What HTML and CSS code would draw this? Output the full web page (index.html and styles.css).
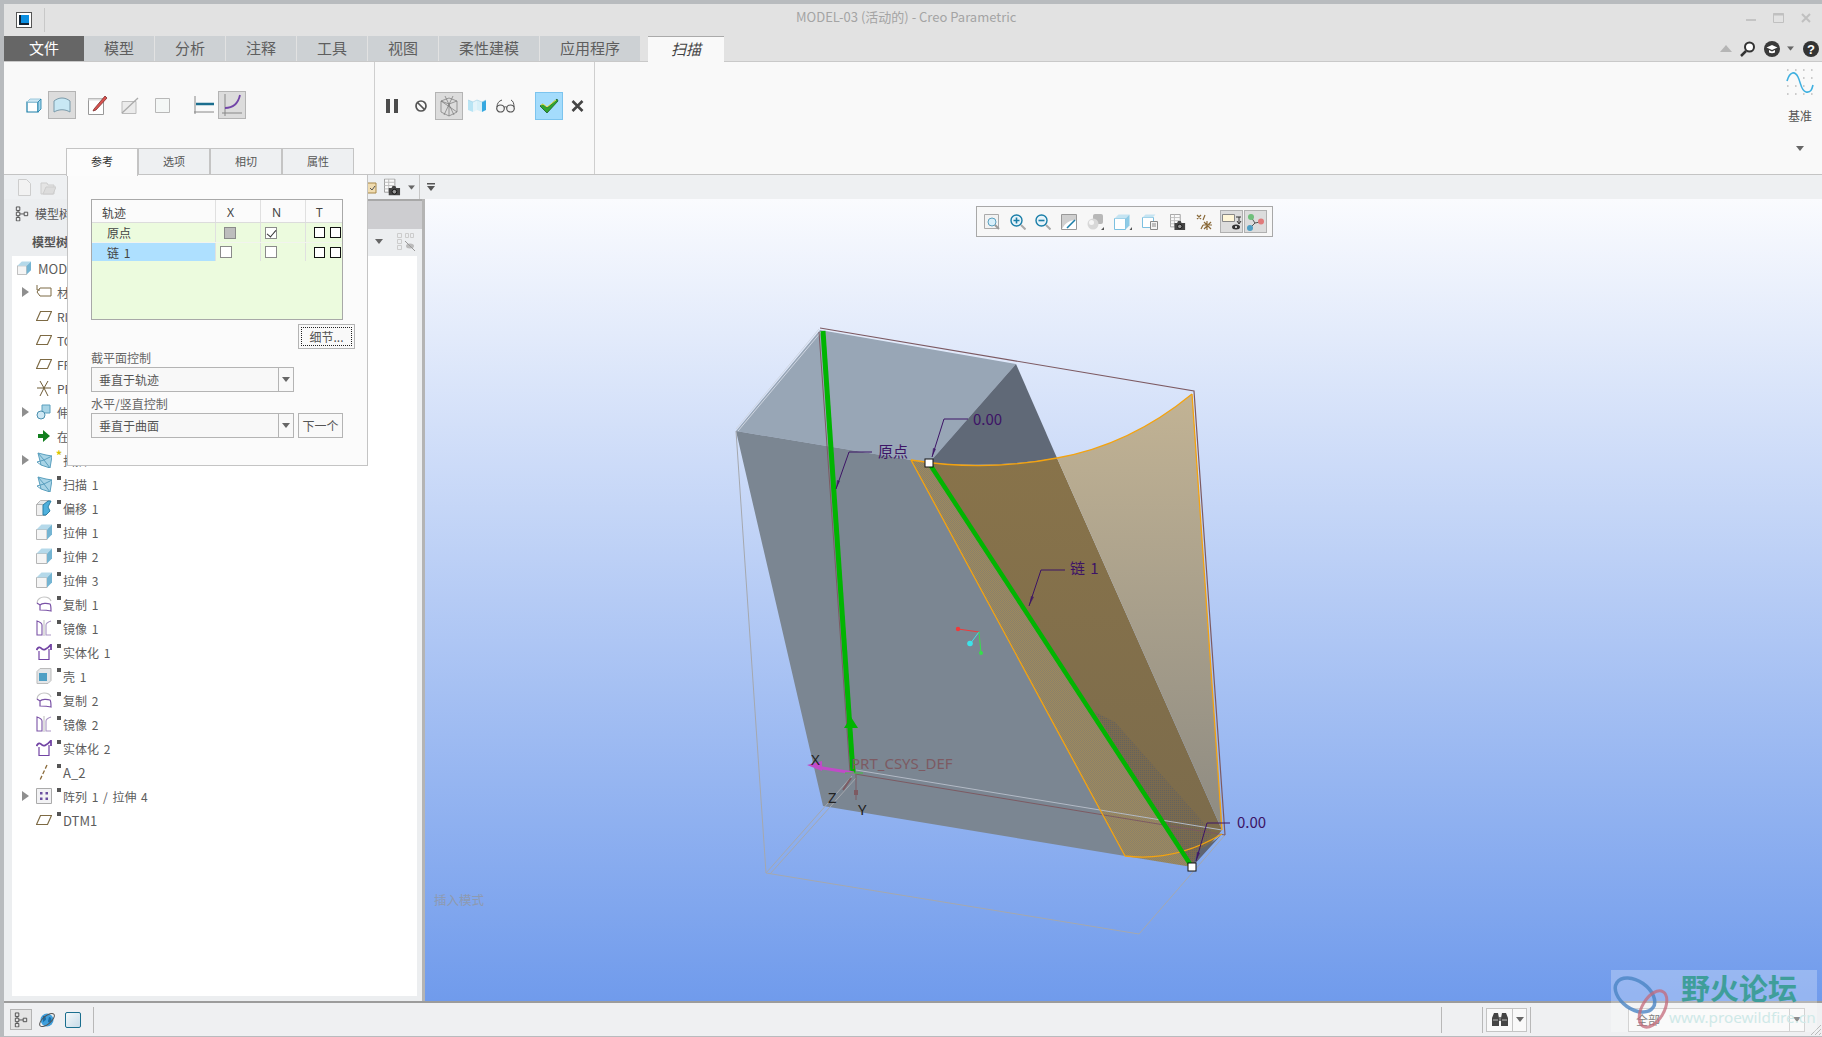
FILE: index.html
```html
<!DOCTYPE html>
<html lang="zh">
<head>
<meta charset="utf-8">
<title>MODEL-03 - Creo Parametric</title>
<link rel="stylesheet" href="styles.css">
</head>
<body>
<svg class="defs" width="0" height="0">
  <defs>
    <symbol id="i-extrude" viewBox="0 0 16 16"><path d="M.5 5.500h10.500v10H.5z" fill="#f5f5f5" stroke="#b5b5b5"/><path d="M.5 5.500l5-5H16l-5 5z" fill="#b5d9ea"/><path d="M11 5.500l5-5v10l-5 5z" fill="#74b4d2"/></symbol>
    <symbol id="i-sweep" viewBox="0 0 16 16"><path d="M2 1l8 2 6 1-2 12-9-3z" fill="#a8d4e6" stroke="#5a9fbe"/><path d="M2 1l6 7 8-4M8 8l6 8M8 8L1 10l4 3" fill="none" stroke="#5a9fbe"/></symbol>
    <symbol id="i-offset" viewBox="0 0 16 16"><path d="M.5 4.500h9v11h-9z" fill="#f0f0f0" stroke="#b5b5b5"/><path d="M.5 4.500l4-4h9l-4 4z" fill="#e4e8ea" stroke="#b5b5b5"/><path d="M7 5l5-4h3l-3 6 2 4-4 4H7z" fill="#4fb0dc" stroke="#2b7fa5"/></symbol>
    <symbol id="i-copy" viewBox="0 0 16 16"><path d="M1 7C1 3 5 1 8 1c4 0 6 1 7 4" fill="none" stroke="#c4c4c4" stroke-width="1.200"/><path d="M1 7c1 1 2 1 3 2M4 14V9c2-2 7-2 10-1 1 1 1 4 1 7-4-1-7-1-11-1z" fill="none" stroke="#7a52a6" stroke-width="1.200"/></symbol>
    <symbol id="i-mirror" viewBox="0 0 16 16"><path d="M1 1c3 1 5 2 5 4v10H1z" fill="none" stroke="#7a52a6" stroke-width="1.100"/><path d="M15 1c-3 1-5 2-5 4v10h5" fill="none" stroke="#a994c4" stroke-width="1.100"/><path d="M8 0v16" stroke="#bbb" stroke-width="1"/></symbol>
    <symbol id="i-solid" viewBox="0 0 16 16"><path d="M3 7v8.500h10V5" fill="#fff" stroke="#7244a4" stroke-width="1.200"/><path d="M.5 6c1.500-3 3.500-3.500 5-1.500s5 1.500 9.500-4L15 6" fill="none" stroke="#7244a4" stroke-width="1.800"/></symbol>
    <symbol id="i-shell" viewBox="0 0 16 16"><path d="M1 3.500l3-3h11v12l-3 3H1z" fill="#e4e6e8" stroke="#bbb"/><path d="M3 5h8v8H3z" fill="#4f9fc4"/></symbol>
    <symbol id="i-axis" viewBox="0 0 16 16"><path d="M11 1L4 16" fill="none" stroke="#8a6a3a" stroke-width="1.300" stroke-dasharray="4 2"/></symbol>
    <symbol id="i-pattern" viewBox="0 0 16 16"><path d="M.5.500h15v15H.5z" fill="#f2f2f4" stroke="#aaa"/><path d="M4 4h2.500v2.500H4zM9.500 4H12v2.500H9.500zM4 9.500h2.500V12H4zM9.500 9.500H12V12H9.500z" fill="#6a4fa0"/></symbol>
    <symbol id="i-plane" viewBox="0 0 16 16"><path d="M4.500 3.500h11l-4 9H.5z" fill="none" stroke="#7d6a44" stroke-width="1.200"/></symbol>
    <symbol id="i-tree" viewBox="0 0 16 18"><path d="M1.500 1.500h4v4h-4zM1.500 7.500h4v4h-4zM1.500 13.500h4v4h-4zM10.500 7.500h4v4h-4zM5.500 9.500h5M3.500 5.500v2M3.500 11.500v2" fill="none" stroke="#444"/></symbol>
    <symbol id="i-arrowdown" viewBox="0 0 8 5"><path d="M0 0h8L4 5z" fill="#666"/></symbol>
    <symbol id="i-cam" viewBox="0 0 18 18"><path d="M.5.500h11v14H.5z" fill="#fafafa" stroke="#999"/><path d="M.5 4h11M.5 7.500h11M.5 11h11M5 .5v14" stroke="#bbb"/><path d="M5 10h3l1-2h3l1 2h4v8H5z" fill="#444"/><circle cx="11" cy="14" r="2.500" fill="#999" stroke="#111"/></symbol>
  </defs>
</svg>

<div class="app">
  <header class="titlebar">
    <span class="appicon"><span class="appicon-in"></span></span>
    <span class="tsep"></span>
    <span class="title">MODEL-03 (活动的) - Creo Parametric</span>
    <span class="winctl">
      <svg width="10" height="10" viewBox="0 0 10 10"><path d="M0 7h10" stroke="#c4c4c4" stroke-width="2"/></svg>
      <svg width="11" height="10" viewBox="0 0 11 10"><path d="M.5.500h10v9H.5z" fill="none" stroke="#c0c0c0"/><path d="M0 1.500h11" stroke="#c0c0c0" stroke-width="2"/></svg>
      <svg width="10" height="10" viewBox="0 0 10 10"><path d="M1 1l8 8M9 1l-8 8" stroke="#c0c0c0" stroke-width="2"/></svg>
    </span>
  </header>

  <nav class="tabs">
    <span class="tab tab-file">文件</span>
    <span class="tab w70">模型</span>
    <span class="tab w70">分析</span>
    <span class="tab w70">注释</span>
    <span class="tab w70">工具</span>
    <span class="tab w70">视图</span>
    <span class="tab w100">柔性建模</span>
    <span class="tab w100">应用程序</span>
    <span class="tab tab-active">扫描</span>
    <span class="tabtools">
      <svg class="tt-up" width="12" height="7" viewBox="0 0 12 7"><path d="M6 0l6 7H0z" fill="#b5b5b5"/></svg>
      <svg class="tt-find" width="15" height="16" viewBox="0 0 15 16"><circle cx="9.500" cy="6" r="4.500" fill="#fff" stroke="#333" stroke-width="2"/><path d="M6 10l-5 5" stroke="#333" stroke-width="2.500"/></svg>
      <svg width="16" height="16" viewBox="0 0 16 16"><circle cx="8" cy="8" r="8" fill="#3a3a3a"/><path d="M2.500 6.500L8 4l5.500 2.500L8 9zM5 9v2.500c2 1 4 1 6 0V9L8 10.500z" fill="#fff"/></svg>
      <svg class="tt-drop" width="7" height="5" viewBox="0 0 8 5"><use href="#i-arrowdown"/></svg>
      <svg width="16" height="16" viewBox="0 0 16 16"><circle cx="8" cy="8" r="8" fill="#333"/><text x="8" y="12.500" class="helpq">?</text></svg>
    </span>
  </nav>

  <section class="ribbon">
    <div class="rgroup rg1">
      <div class="rrow">
        <span class="rb"><svg width="16" height="15" viewBox="0 0 16 15"><path d="M1 4h11v10H1z" fill="#fff" stroke="#1a7ea8" stroke-width="1.200"/><path d="M1 4l3-3h11l-3 3z" fill="#cfe8f4" stroke="#9cc8dc"/><path d="M12 4l3-3v10l-3 3z" fill="#a4d4ea" stroke="#1a7ea8" stroke-width=".8"/></svg></span>
        <span class="rb on"><svg width="18" height="16" viewBox="0 0 18 16"><path d="M1 4c5-4 11-4 16 0v11c-5-3-11-3-16 0z" fill="#c8e8f4" stroke="#7a9aaa"/></svg></span>
        <span class="rb m8"><svg width="20" height="20" viewBox="0 0 20 20"><path d="M.5 3.500h15v16H.5z" fill="#fff" stroke="#999"/><path d="M.5 3.500h15v2H.5z" fill="#ddd"/><path d="M6 14L17 1l2 2-11 12-3 1z" fill="#d9534f" stroke="#803030" stroke-width=".8"/></svg></span>
        <span class="rb m4"><svg width="18" height="17" viewBox="0 0 18 17"><path d="M1 4.500h14v12H1z" fill="#ebebeb" stroke="#bbb"/><path d="M1 16L17 1" stroke="#aaa" stroke-width="1.300"/></svg></span>
        <span class="rb m4"><svg width="15" height="15" viewBox="0 0 15 15"><path d="M.5.500h14v14H.5z" fill="#f4f7f6" stroke="#b8b8b8"/></svg></span>
        <span class="rb m14"><svg width="20" height="20" viewBox="0 0 20 20"><path d="M1 1v18" stroke="#888"/><path d="M0 17h20" stroke="#888"/><path d="M2 9h18" stroke="#1b6e8e" stroke-width="2.500"/></svg></span>
        <span class="rb on"><svg width="20" height="22" viewBox="0 0 20 22"><path d="M3 0v22M0 19h20" stroke="#888"/><path d="M3 14c7 0 13-4 15-13" fill="none" stroke="#7245a8" stroke-width="1.800"/></svg></span>
      </div>
      <div class="subtabs">
        <span class="subtab sel">参考</span>
        <span class="subtab">选项</span>
        <span class="subtab">相切</span>
        <span class="subtab">属性</span>
      </div>
    </div>
    <div class="rgroup rg2">
      <div class="rrow">
        <span class="rb"><svg width="12" height="14" viewBox="0 0 12 14"><path d="M0 0h4v14H0zM8 0h4v14H8z" fill="#4c4c4c"/></svg></span>
        <span class="rb m1"><svg width="12" height="12" viewBox="0 0 12 12"><circle cx="6" cy="6" r="5" fill="none" stroke="#555" stroke-width="1.700"/><path d="M2.500 2.500l7 7" stroke="#555" stroke-width="1.700"/></svg></span>
        <span class="rb on"><svg width="22" height="22" viewBox="0 0 22 22"><path d="M3 6l8-3 8 3v11l-8 4-8-4zM3 6l8 3 8-3M11 9v12M7 1l9 19M15 1L6 20M3 6l16 11" fill="none" stroke="#777" stroke-width=".7"/></svg></span>
        <span class="rb"><svg width="18" height="16" viewBox="0 0 18 16"><path d="M0 2l5 2v10l-5-2z" fill="#b8e4f4"/><path d="M5 4l4-2v10l-4 2z" fill="#e4f4fa"/><path d="M9 2l5 2v10l-5-2z" fill="#d8f0f8"/><path d="M14 4l4-2v10l-4 2z" fill="#36a8e0"/><path d="M0 2l5 2 4-2 5 2 4-2" fill="none" stroke="#9ccfe4" stroke-width=".6"/></svg></span>
        <span class="rb"><svg width="19" height="14" viewBox="0 0 19 14"><ellipse cx="4.500" cy="9.500" rx="3.800" ry="3.500" fill="#f4f4f4" stroke="#555" stroke-width="1.200"/><ellipse cx="14.500" cy="9.500" rx="3.800" ry="3.500" fill="#f4f4f4" stroke="#555" stroke-width="1.200"/><path d="M8 8.500c1-1 2-1 3 0M1 8c0-4 2-6 5-7M18 8c0-4-1-6-3-7" fill="none" stroke="#555"/></svg></span>
        <span class="rb okbtn m16"><svg width="20" height="16" viewBox="0 0 20 16"><path d="M1 8l3-2 4 4L18 1l1 2L8 15z" fill="#2fa52f" stroke="#1c5a2a" stroke-width=".8"/><path d="M2 7l2-1 4 3 9-7" fill="none" stroke="#e6e24a"/></svg></span>
        <span class="rb"><svg width="13" height="12" viewBox="0 0 13 12"><path d="M1.500 1l10 10M11.500 1l-10 10" stroke="#444" stroke-width="2.600"/></svg></span>
      </div>
    </div>
    <div class="rdatum">
      <svg width="28" height="26" viewBox="0 0 28 26">
        <path d="M1 12C4 2 9 2 12 8s3 14 8 15 6-3 7-7" fill="none" stroke="#3fb0e0" stroke-width="1.600"/>
        <path d="M1.500 1h.8M9.500 1h.8M17.500 1h.8M25.500 1h.8M17.500 9h.8M25.500 9h.8M1.500 17h.8M9.500 17h.8M17.500 17h.8M1.500 25h.8M9.500 25h.8M17.500 25h.8M25.500 25h.8" stroke="#444"/>
      </svg>
      <span class="rdatum-t">基准</span>
      <svg class="rdatum-a" width="8" height="5" viewBox="0 0 8 5"><use href="#i-arrowdown"/></svg>
    </div>
  </section>

  <div class="quick">
    <svg class="q-new" width="13" height="17" viewBox="0 0 13 17"><path d="M.5.500h8l4 4v12H.5z" fill="#f2f2f2" stroke="#cdcdcd"/></svg>
    <svg class="q-open" width="16" height="15" viewBox="0 0 16 15"><path d="M1 3h6l1 2h6v9H1z" fill="#e4e4e4" stroke="#cdcdcd"/><path d="M3 14l3-7h10l-3 7z" fill="#dcdcdc" stroke="#cdcdcd"/></svg>
    <svg class="q-clip" width="10" height="14" viewBox="0 0 10 14"><path d="M0 3h9v10H0z" fill="#f0dcb0" stroke="#a88848"/><path d="M3 8l2 2 3-4" fill="none" stroke="#555"/></svg>
    <svg class="q-cam" width="17" height="18" viewBox="0 0 18 18"><use href="#i-cam"/></svg>
    <svg class="q-drop" width="7" height="5" viewBox="0 0 8 5"><use href="#i-arrowdown"/></svg>
    <span class="q-sep"></span>
    <svg class="q-more" width="8" height="8" viewBox="0 0 8 8"><path d="M0 0h8v1.500H0z" fill="#555"/><path d="M0 3h8L4 8z" fill="#555"/></svg>
  </div>

  <main class="main">
    <aside class="left">
      <div class="lhead">
        <svg class="lhead-ic" width="14" height="17" viewBox="0 0 16 18"><use href="#i-tree"/></svg>
        <span class="lhead-t">模型树</span>
        <span class="lhead-fill"></span>
      </div>
      <div class="lsub">
        <span class="lsub-t">模型树</span>
        <svg class="lsub-d" width="8" height="5" viewBox="0 0 8 5"><use href="#i-arrowdown"/></svg>
        <svg class="lsub-ic" width="20" height="19" viewBox="0 0 20 19"><path d="M1.500 1.500h4v4h-4zM1.500 7.500h4v4h-4zM1.500 13.500h4v4h-4zM9.500 1.500h3v4h-3zM14.500 1.500h3v4h-3z" fill="none" stroke="#ccc"/><ellipse cx="14" cy="14" rx="4" ry="2.500" fill="#bbb"/><path d="M9 9l10 10" stroke="#999"/></svg>
      </div>
      <div class="tree">
        <div class="row root"><svg class="ic-part" width="14" height="14" viewBox="0 0 16 16"><use href="#i-extrude"/></svg><span>MODEL-03.PRT</span></div>
        <div class="row exp"><i class="tri"></i><svg class="ic" width="16" height="16" viewBox="0 0 16 16"><path d="M1 1v5h3M4 4h11v8H4L1 8z" fill="none" stroke="#7d6a44"/></svg><span>材料</span></div>
        <div class="row"><svg class="ic" width="16" height="16" viewBox="0 0 16 16"><use href="#i-plane"/></svg><span>RIGHT</span></div>
        <div class="row"><svg class="ic" width="16" height="16" viewBox="0 0 16 16"><use href="#i-plane"/></svg><span>TOP</span></div>
        <div class="row"><svg class="ic" width="16" height="16" viewBox="0 0 16 16"><use href="#i-plane"/></svg><span>FRONT</span></div>
        <div class="row"><svg class="ic" width="16" height="16" viewBox="0 0 16 16"><path d="M4 1l4 7 4-7M8 8L4 16M8 8l4 8M1 8h14" fill="none" stroke="#6d5a34"/></svg><span>PRT_CSYS_DEF</span></div>
        <div class="row exp"><i class="tri"></i><svg class="ic" width="16" height="16" viewBox="0 0 16 16"><path d="M6 1h8v8H6z" fill="#a8d4e6" stroke="#5a9fbe"/><circle cx="5" cy="11" r="4" fill="#cfe8f4" stroke="#4a8fae"/></svg><span>伸出项</span></div>
        <div class="row"><svg class="ic" width="16" height="16" viewBox="0 0 16 16"><path d="M2 6h5V2l7 6-7 6v-4H2z" fill="#127f1e"/></svg><span>在此插入</span></div>
        <div class="row exp mark"><i class="tri"></i><svg class="ic" width="16" height="16" viewBox="0 0 16 16"><use href="#i-sweep"/></svg><b class="star">*</b><span>扫描 2</span></div>
        <div class="row mark"><svg class="ic" width="16" height="16" viewBox="0 0 16 16"><use href="#i-sweep"/></svg><b class="dot"></b><span>扫描 1</span></div>
        <div class="row mark"><svg class="ic" width="16" height="16" viewBox="0 0 16 16"><use href="#i-offset"/></svg><b class="dot"></b><span>偏移 1</span></div>
        <div class="row mark"><svg class="ic" width="16" height="16" viewBox="0 0 16 16"><use href="#i-extrude"/></svg><b class="dot"></b><span>拉伸 1</span></div>
        <div class="row mark"><svg class="ic" width="16" height="16" viewBox="0 0 16 16"><use href="#i-extrude"/></svg><b class="dot"></b><span>拉伸 2</span></div>
        <div class="row mark"><svg class="ic" width="16" height="16" viewBox="0 0 16 16"><use href="#i-extrude"/></svg><b class="dot"></b><span>拉伸 3</span></div>
        <div class="row mark"><svg class="ic" width="16" height="16" viewBox="0 0 16 16"><use href="#i-copy"/></svg><b class="dot"></b><span>复制 1</span></div>
        <div class="row mark"><svg class="ic" width="16" height="16" viewBox="0 0 16 16"><use href="#i-mirror"/></svg><b class="dot"></b><span>镜像 1</span></div>
        <div class="row mark"><svg class="ic" width="16" height="16" viewBox="0 0 16 16"><use href="#i-solid"/></svg><b class="dot"></b><span>实体化 1</span></div>
        <div class="row mark"><svg class="ic" width="16" height="16" viewBox="0 0 16 16"><use href="#i-shell"/></svg><b class="dot"></b><span>壳 1</span></div>
        <div class="row mark"><svg class="ic" width="16" height="16" viewBox="0 0 16 16"><use href="#i-copy"/></svg><b class="dot"></b><span>复制 2</span></div>
        <div class="row mark"><svg class="ic" width="16" height="16" viewBox="0 0 16 16"><use href="#i-mirror"/></svg><b class="dot"></b><span>镜像 2</span></div>
        <div class="row mark"><svg class="ic" width="16" height="16" viewBox="0 0 16 16"><use href="#i-solid"/></svg><b class="dot"></b><span>实体化 2</span></div>
        <div class="row mark"><svg class="ic" width="16" height="16" viewBox="0 0 16 16"><use href="#i-axis"/></svg><b class="dot"></b><span class="lat">A_2</span></div>
        <div class="row exp mark"><i class="tri"></i><svg class="ic" width="16" height="16" viewBox="0 0 16 16"><use href="#i-pattern"/></svg><b class="dot"></b><span>阵列 1 / 拉伸 4</span></div>
        <div class="row mark"><svg class="ic" width="16" height="16" viewBox="0 0 16 16"><use href="#i-plane"/></svg><b class="dot"></b><span class="lat">DTM1</span></div>
      </div>
    </aside>

    <section class="view">
      <div class="vtools">
        <svg width="16" height="16" viewBox="0 0 16 16"><path d="M.5.500h14v14H.5z" fill="#f2f2f2" stroke="#aaa"/><circle cx="8" cy="8" r="4" fill="#d8effa" stroke="#5a9fbe"/><path d="M11 11l4 4" stroke="#999" stroke-width="2"/></svg>
        <svg width="16" height="16" viewBox="0 0 16 16"><circle cx="6.500" cy="6.500" r="5.500" fill="#e8f4fa" stroke="#1a7ea8" stroke-width="1.400"/><path d="M3.500 6.500h6M6.500 3.500v6" stroke="#1a7ea8" stroke-width="1.600"/><path d="M11 11l4.500 4.500" stroke="#aaa" stroke-width="2"/></svg>
        <svg width="16" height="16" viewBox="0 0 16 16"><circle cx="6.500" cy="6.500" r="5.500" fill="#e8f4fa" stroke="#1a7ea8" stroke-width="1.400"/><path d="M3.500 6.500h6" stroke="#1a7ea8" stroke-width="1.600"/><path d="M11 11l4.500 4.500" stroke="#aaa" stroke-width="2"/></svg>
        <svg width="16" height="16" viewBox="0 0 16 16"><path d="M.5.500h15v15H.5z" fill="#fff" stroke="#999"/><path d="M1 1h14v5c-6 0-11 3-14 9z" fill="#cfcfcf"/><path d="M6 14L14 6" stroke="#1a7ea8" stroke-width="1.600"/></svg>
        <svg class="corner" width="18" height="16" viewBox="0 0 18 16"><rect x="6" y="0" width="10" height="10" rx="2" fill="#b8b8b8"/><circle cx="6" cy="10" r="5.500" fill="#d8d8d8"/><circle cx="4.500" cy="8.500" r="2.500" fill="#f6f6f6"/><path d="M14 16l3-3v3z" fill="#555"/></svg>
        <svg class="corner" width="18" height="16" viewBox="0 0 18 16"><path d="M.5 4.500h11v11H.5z" fill="#fff" stroke="#7cc0e0"/><path d="M.5 4.500l4-4h11l-4 4z" fill="#c5e4f2"/><path d="M11.500 4.500l4-4v11l-4 4z" fill="#8fcbe6"/><path d="M15.500 16l2.500-3v3z" fill="#555"/></svg>
        <svg class="corner" width="18" height="16" viewBox="0 0 18 16"><path d="M.5 3.500h11v10H.5z" fill="#fff" stroke="#7cc0e0"/><path d="M.5 3.500l3-3h10l-3 3z" fill="#c5e4f2"/><path d="M8.500 7.500h7v8h-7z" fill="#f4f4f4" stroke="#888"/><path d="M10 10h4M10 12h4" stroke="#888"/></svg>
        <svg width="16" height="16" viewBox="0 0 18 18"><use href="#i-cam"/></svg>
        <svg class="corner" width="18" height="16" viewBox="0 0 18 16"><path d="M1 1l4 4M5 1L1 5M9 1L7 6M5 15l2-4M8 8l7 7M15 8l-7 7M11 7v9M7 11h9" stroke="#8a6a3a" stroke-width="1.200" fill="none"/></svg>
        <span class="vt-on"><svg width="20" height="16" viewBox="0 0 20 16"><path d="M.5.500h12v7H.5z" fill="#fff6d8" stroke="#888"/><path d="M14 3h5M17 3v6M15 7l2 3 2-3" fill="none" stroke="#333"/><ellipse cx="14" cy="13" rx="4" ry="2.500" fill="#333"/><circle cx="14" cy="13" r="1" fill="#fff"/></svg></span>
        <span class="vt-on"><svg width="18" height="18" viewBox="0 0 18 18"><path d="M5 4l4 6 5-1M9 10l-5 5" stroke="#555" fill="none"/><circle cx="5" cy="4" r="3" fill="#6fbf7a"/><circle cx="15" cy="8.500" r="3" fill="#e07a7a"/><circle cx="4" cy="15" r="3" fill="#4f9fc4"/></svg></span>
      </div>

      <svg class="scene" width="1397" height="802" viewBox="425 199 1397 802">
        <defs>
          <linearGradient id="gtan" x1="0" y1="0" x2="0" y2="1"><stop offset="0" stop-color="#c2b394"/><stop offset="1" stop-color="#8e8b82"/></linearGradient>
          <linearGradient id="gbrown" x1="0" y1="0" x2="0" y2="1"><stop offset="0" stop-color="#88734a"/><stop offset="1" stop-color="#7b6b4c"/></linearGradient>
          <pattern id="pstrip" width="2" height="2" patternUnits="userSpaceOnUse"><rect width="2" height="2" fill="#a08a5a"/><rect width="1" height="1" fill="#88806c"/><rect x="1" y="1" width="1" height="1" fill="#88806c"/></pattern>
          <pattern id="pdark" width="2" height="2" patternUnits="userSpaceOnUse"><rect width="2" height="2" fill="#7a6a4e"/><rect width="1" height="1" fill="#64625c"/></pattern>
        </defs>
        <path d="M736 431L820 330 1016 364 929 463 911 460z" fill="#98a6b6"/>
        <path d="M1016 364L1057 458Q1000 468 929 463z" fill="#606977"/>
        <path d="M736 431L911 460 1125 856 1192 867 823 806z" fill="#7b8692"/>
        <path d="M911 460L929 463 1192 867 1125 856z" fill="url(#pstrip)"/>
        <path d="M929 463Q1000 468 1057 458L1222 830 1192 867z" fill="url(#gbrown)"/>
        <path d="M1057 458Q1130 445 1192 394L1222 830z" fill="url(#gtan)"/>
        <path d="M1095 712L1115 722 1212 832 1192 867z" fill="url(#pdark)"/>
        <path d="M1192 867L1198 850Q1212 844 1222 834z" fill="#5f6470"/>

        <g fill="none" stroke="#a5a8ae" stroke-width="1">
          <path d="M736 431L766 873 1139 934 1225 835"/>
          <path d="M766 873L852 776M770 874L856 778"/>
        </g>
        <path d="M736 429L819 329M738 431L821 332" fill="none" stroke="#cfd6e2"/>
        <path d="M820 328L1194 391 1225 835" fill="none" stroke="#7d5a62" stroke-width="1.200"/>
        <path d="M855 774L1225 835" fill="none" stroke="#7d5a62" stroke-width="1"/>
        <path d="M856 770L1222 830" fill="none" stroke="#b3bac6"/>
        <path d="M819 332L850 773" fill="none" stroke="#7d5a62"/>

        <g fill="none" stroke="#f4a30f" stroke-width="1.300">
          <path d="M911 460Q985 472 1057 458Q1130 445 1192 394"/>
          <path d="M1192 394L1222 830"/>
          <path d="M911 460L1125 856Q1175 862 1222 834"/>
        </g>

        <path d="M823 331L853 773" stroke="#01b501" stroke-width="5" fill="none"/>
        <path d="M851 717L858 728H844z" fill="#01b501"/>
        <path d="M929 463L1192 867" stroke="#01b501" stroke-width="4.500" fill="none"/>

        <path d="M854 773L816 767" stroke="#c04bc8" stroke-width="3"/>
        <path d="M807 765L822 761 822 771z" fill="#c04bc8"/>
        <path d="M845 773h18" stroke="#3fc43f"/>
        <path d="M851 778L843 790" stroke="#7d5a62" stroke-width="2" fill="none"/>
        <path d="M856 775V800" stroke="#7d5a62" fill="none"/>
        <path d="M854 790h4v5h-4z" fill="#7d5a62"/>

        <g fill="none" stroke="#3d1466" stroke-width="1">
          <path d="M932 457L944 419H968"/>
          <path d="M836 489L849 452H872"/>
          <path d="M1029 606L1041 570H1065"/>
          <path d="M1196 861L1207 823H1230"/>
        </g>
        <g fill="#3d1466" opacity=".75">
          <path d="M932 457l1-9 3 1z"/><path d="M836 489l1-9 3 1z"/><path d="M1029 606l2-10 3 1z"/><path d="M1196 861l1-9 3 1z"/>
        </g>

        <path d="M979 632L958 629" stroke="#f03a3a" stroke-width="1"/><circle cx="958" cy="629" r="2.200" fill="#f03a3a"/>
        <path d="M979 632L970 644" stroke="#3ce4ea" stroke-width="1"/><circle cx="970" cy="643.500" r="2.800" fill="#3ce4ea"/>
        <path d="M979 632L981 653" stroke="#35e04a" stroke-width="1"/><circle cx="981" cy="653" r="2" fill="#35e04a"/>

        <rect x="925" y="459" width="8" height="8" fill="#fff" stroke="#111"/>
        <rect x="1188" y="863" width="8" height="8" fill="#fff" stroke="#111"/>

        <text x="973" y="425" class="lbl">0.00</text>
        <text x="878" y="457" class="lbl">原点</text>
        <text x="1070" y="574" class="lbl">链 1</text>
        <text x="1237" y="828" class="lbl">0.00</text>
        <text x="851" y="769" class="csys">PRT_CSYS_DEF</text>
        <text x="811" y="765" class="axl">X</text>
        <text x="828" y="803" class="axl">Z</text>
        <text x="858" y="815" class="axl">Y</text>
        <text x="434" y="905" class="mode">插入模式</text>
      </svg>
    </section>

    <div class="popup">
      <div class="tbl">
        <div class="tr th"><span class="c1">轨迹</span><span class="c2">X</span><span class="c2">N</span><span class="c3">T</span></div>
        <div class="tr r1"><span class="c1 ind">原点</span><span class="c2"><i class="cb gray"></i></span><span class="c2"><i class="cb chk"></i></span><span class="c3"><i class="cb k"></i><i class="cb k"></i></span></div>
        <div class="tr r2"><span class="c1 ind hl">链 1</span><span class="c2"><i class="cb"></i></span><span class="c2"><i class="cb"></i></span><span class="c3"><i class="cb k"></i><i class="cb k"></i></span></div>
      </div>
      <div class="detail-row"><span class="btn detail"><span class="focus">细节...</span></span></div>
      <div class="flabel">截平面控制</div>
      <div class="combo"><span class="combo-t">垂直于轨迹</span><span class="combo-a"><svg width="8" height="5" viewBox="0 0 8 5"><use href="#i-arrowdown"/></svg></span></div>
      <div class="flabel f2">水平/竖直控制</div>
      <div class="combo-row">
        <div class="combo"><span class="combo-t">垂直于曲面</span><span class="combo-a"><svg width="8" height="5" viewBox="0 0 8 5"><use href="#i-arrowdown"/></svg></span></div>
        <span class="btn next">下一个</span>
      </div>
    </div>
  </main>

  <footer class="status">
    <span class="st-on"><svg width="14" height="17" viewBox="0 0 16 18"><use href="#i-tree"/></svg></span>
    <svg class="st-globe" width="16" height="16" viewBox="0 0 16 16"><circle cx="8" cy="8" r="6.500" fill="#3f9fdc"/><path d="M4 4c2 0 3 1 3 3s-3 2-3 4M10 5c2 0 3 2 2 4s-3 2-3 0" fill="#1a6ea8"/><ellipse cx="8" cy="8" rx="9" ry="4" transform="rotate(-40 8 8)" fill="none" stroke="#555"/></svg>
    <span class="st-sq"></span>
    <span class="st-sep first"></span>
    <span class="st-grow"></span>
    <span class="st-sep"></span>
    <span class="st-gap"></span>
    <span class="st-sep"></span>
    <span class="st-find">
      <span class="st-bin"><svg width="16" height="15" viewBox="0 0 16 15"><path d="M2 1h4l1 5v8H0V6zM10 1h4l2 5v8H9V6z" fill="#444"/><path d="M7 5h2v4H7z" fill="#777"/><path d="M1 8h5M10 8h5" stroke="#bbb"/></svg></span>
      <span class="st-bin-a"><svg width="8" height="5" viewBox="0 0 8 5"><use href="#i-arrowdown"/></svg></span>
    </span>
    <span class="st-sep"></span>
    <div class="st-filter"><span class="st-filter-t">全部</span><span class="st-filter-a"><svg width="8" height="5" viewBox="0 0 8 5"><use href="#i-arrowdown"/></svg></span></div>
    <svg class="grip" width="12" height="12" viewBox="0 0 12 12"><path d="M11 1L1 11M11 5l-6 6M11 9l-2 2" stroke="#bbb"/></svg>
  </footer>

  <div class="wm">
    <svg class="wm-logo" width="62" height="62" viewBox="0 0 62 62">
      <ellipse cx="22" cy="25" rx="22" ry="14" transform="rotate(35 22 25)" fill="none" stroke="#4a84c4" stroke-width="3.500" opacity=".8"/>
      <ellipse cx="40" cy="39" rx="11" ry="20" transform="rotate(30 40 39)" fill="none" stroke="#c46a7a" stroke-width="3" opacity=".75"/>
    </svg>
    <span class="wm-cn">野火论坛</span>
    <span class="wm-en">www.proewildfire.cn</span>
  </div>
</div>
</body>
</html>
```
FILE: styles.css
```css
* { box-sizing: border-box; }
html, body { margin: 0; padding: 0; height: 100%; overflow: hidden; }
body { font-family: "Noto Sans CJK SC", "Noto Sans", sans-serif; font-size: 12px; color: #555; background: #eef0f2; }
.defs { position: absolute; }
.app { position: relative; width: 1822px; height: 1037px; display: flex; flex-direction: column; border-top: 4px solid #b8bbbe; border-left: 4px solid #b8bbbe; }

/* title bar */
.titlebar { height: 32px; flex: none; background: #e2e2e2; display: flex; align-items: center; position: relative; padding-left: 12px; }
.appicon { width: 16px; height: 16px; background: #fff; border: 1px solid #555; display: flex; align-items: center; justify-content: center; }
.appicon-in { width: 10px; height: 10px; background: #0a8ee0; border-left: 2px solid #123; border-bottom: 2px solid #123; }
.tsep { width: 1px; height: 24px; background: #c8c8c8; margin-left: 12px; }
.title { position: absolute; left: 792px; top: 3px; font-size: 13px; color: #a4a4a4; }
.winctl { margin-left: auto; display: flex; align-items: center; gap: 17px; padding-right: 11px; padding-bottom: 4px; }

/* tabs */
.tabs { height: 26px; flex: none; background: #e2e2e2; display: flex; gap: 1px; border-bottom: 1px solid #c9c9c9; }
.tab { height: 25px; background: #cdd1d4; color: #5e5e5e; font-size: 15px; display: flex; align-items: center; justify-content: center; padding-bottom: 3px; }
.tab-file { width: 80px; background: #666; color: #fff; margin-right: -1px; }
.w70 { width: 70px; }
.w100 { width: 100px; }
.tab-active { width: 76px; margin-left: 7px; height: 26px; background: #f9f9f9; font-style: italic; color: #444; border-top: 1px solid #aaa; z-index: 1; }
.tabtools { margin-left: auto; display: flex; align-items: center; padding-right: 3px; gap: 10px; }
.tt-up { margin-right: -2px; }
.tt-find { margin-right: -1px; }
.tt-drop { margin: 0 -1px 0 -3px; }
.helpq { font: bold 13px "Liberation Sans", sans-serif; fill: #fff; text-anchor: middle; }

/* ribbon */
.ribbon { height: 113px; flex: none; background: #f9f9f9; display: flex; border-bottom: 1px solid #c4c4c4; }
.rgroup { display: flex; flex-direction: column; justify-content: space-between; border-right: 1px solid #cfcfcf; padding-top: 29px; }
.rg1 { width: 371px; padding-left: 16px; }
.rg2 { width: 220px; padding-left: 3px; padding-top: 30px; }
.rrow { display: flex; align-items: center; height: 28px; }
.rb { width: 28px; height: 28px; display: flex; align-items: center; justify-content: center; flex: none; }
.rb.on { background: #dcdcdc; border: 1px solid #b4b4b4; }
.okbtn { background: #a4dcfc; border: 1px solid #7cc4ee; }
.m1 { margin-left: 1px; }
.m4 { margin-left: 4px; }
.m8 { margin-left: 8px; }
.m14 { margin-left: 14px; }
.m16 { margin-left: 16px; }
.subtabs { display: flex; margin-left: 46px; height: 26px; }
.subtab { width: 72px; height: 26px; font-size: 11px; color: #555; background: #eef0f2; border: 1px solid #c4c4c4; border-bottom: 0; display: flex; align-items: center; justify-content: center; padding-bottom: 2px; }
.subtab.sel { background: #fcfcfc; color: #333; height: 28px; padding-bottom: 4px; position: relative; z-index: 3; }
.rdatum { margin-left: auto; width: 40px; margin-right: 2px; display: flex; flex-direction: column; align-items: center; padding-top: 7px; }
.rdatum-t { font-size: 12px; color: #555; margin-top: 12px; line-height: 18px; }
.rdatum-a { margin-top: 21px; }

/* quick toolbar */
.quick { height: 24px; flex: none; background: #eef0f2; display: flex; align-items: center; padding-left: 14px; }
.q-new { flex: none; }
.q-open { margin-left: 9px; flex: none; }
.q-clip { margin-left: 311px; flex: none; }
.q-cam { margin-left: 7px; flex: none; }
.q-drop { margin-left: 7px; flex: none; }
.q-sep { width: 1px; height: 24px; background: #c8c8c8; margin-left: 4px; }
.q-more { margin-left: 7px; }

/* main */
.main { height: 802px; flex: none; display: flex; position: relative; }
.left { width: 421px; flex: none; background: #eceef0; border-right: 3px solid #b4b4b4; display: flex; flex-direction: column; }
.lhead { height: 30px; display: flex; align-items: center; padding-left: 11px; gap: 6px; flex: none; }
.lhead-ic { margin-bottom: 2px; }
.lhead-t { font-size: 12px; color: #555; margin-bottom: 2px; }
.lhead-fill { margin-left: auto; width: 70px; height: 30px; background: #cdcdd0; border-top: 2px solid #a8a8a8; }
.lsub { height: 27px; display: flex; align-items: center; padding-left: 28px; padding-bottom: 2px; flex: none; }
.lsub-t { font-size: 12px; font-weight: 700; color: #555; }
.lsub-d { margin-left: auto; margin-right: 13px; }
.lsub-ic { margin-right: 6px; }
.tree { margin: 0 5px 5px 8px; background: #fff; flex: 1; }
.row { height: 24px; display: flex; align-items: center; padding-left: 24px; position: relative; font-size: 12px; color: #5c5c5c; white-space: nowrap; word-spacing: 2px; }
.row.root { padding-left: 5px; font-size: 13px; }
.lat { font-size: 13px; }
.ic-part { margin-right: 7px; }
.ic { margin-right: 5px; flex: none; }
.row.mark .ic { margin-right: 11px; }
.tri { position: absolute; left: 10px; top: 7px; width: 0; height: 0; border-left: 7px solid #8f8f8f; border-top: 5px solid transparent; border-bottom: 5px solid transparent; }
.dot { position: absolute; left: 45px; top: 4px; width: 4px; height: 4px; background: #555; }
.star { position: absolute; left: 44px; top: 1px; color: #d8c400; font-size: 12px; line-height: 12px; }

/* view */
.view { flex: 1; position: relative; background: linear-gradient(#fafbfe, #709bec); overflow: hidden; }
.scene { position: absolute; left: 0; top: 0; }
.vtools { position: absolute; left: 551px; top: 7px; width: 297px; height: 31px; background: #f7f7f7; border: 1px solid #a8a8a8; display: flex; align-items: center; padding-left: 7px; gap: 9.700px; z-index: 2; }
.vt-on { width: 23px; height: 23px; flex: none; background: #dcdcdc; border: 1px solid #b0b0b0; display: flex; align-items: center; justify-content: center; margin-right: -6px; margin-left: -3px; }
.lbl { font: 15px "Noto Sans CJK SC", sans-serif; fill: #3d1466; word-spacing: 2px; }
.csys { font: 15px "Noto Sans", sans-serif; fill: #7d5a62; }
.axl { font: 15px "Noto Sans", sans-serif; fill: #222; }
.mode { font: 12.500px "Noto Sans CJK SC", sans-serif; fill: #8e9ab0; }

/* popup */
.popup { position: absolute; left: 63px; top: 0; margin-top: -24px; width: 301px; height: 291px; background: #fbfbfb; border: 1px solid #c4c4c4; border-top: 0; z-index: 2; padding: 24px 24px 0 23px; }
.tbl { width: 252px; height: 121px; background: #ecfbde; border: 1px solid #a8a8a8; }
.tr { display: flex; }
.th { height: 23px; background: #fbfbfb; border-bottom: 1px solid #dcdcdc; }
.th span { padding-top: 2px; }
.r1 { height: 20px; border-bottom: 1px solid #f2f4ee; }
.r2 { height: 18px; }
.c1 { width: 124px; border-right: 1px solid #e0e0e0; padding-left: 10px; display: flex; align-items: center; font-size: 12px; color: #444; }
.c1.ind { padding-left: 15px; word-spacing: 2px; }
.c1.hl { background: #aee0ff; }
.c2 { width: 45px; border-right: 1px solid #e0e0e0; display: flex; align-items: center; padding-left: 4px; font-size: 12px; color: #444; font-family: "Noto Sans", sans-serif; }
.c3 { flex: 1; display: flex; align-items: center; gap: 5px; padding-left: 8px; font-size: 12px; color: #444; font-family: "Noto Sans", sans-serif; }
.th .c2 { padding-left: 11px; }
.th .c3 { padding-left: 10px; }
.cb { width: 12px; height: 12px; background: #fff; border: 1px solid #8a8a8a; display: block; flex: none; position: relative; }
.cb.k { width: 11px; height: 11px; border-color: #111; }
.cb.gray { background: #bdbdbd; margin-left: 4px; }
.cb.chk::after { content: ""; position: absolute; left: 3px; top: 0; width: 4px; height: 8px; border: solid #333; border-width: 0 1.500px 1.500px 0; transform: rotate(40deg); }
.detail-row { display: flex; justify-content: flex-end; margin-top: 4px; margin-right: -12px; }
.btn { border: 1px solid #b4b4b4; background: #f9f9f9; font-size: 12px; color: #555; display: flex; align-items: center; justify-content: center; }
.detail { width: 57px; height: 25px; padding: 2px; }
.focus { width: 100%; height: 100%; border: 1px dotted #222; display: flex; align-items: center; justify-content: center; }
.flabel { font-size: 12px; line-height: 16px; height: 17px; margin-top: 1px; color: #666; }
.f2 { margin-top: 4px; }
.combo { width: 203px; height: 25px; border: 1px solid #b4b4b4; background: #f8f8f8; display: flex; align-items: center; }
.combo-t { flex: 1; padding-left: 7px; font-size: 12px; color: #555; }
.combo-a { width: 15px; height: 100%; border-left: 1px solid #b4b4b4; display: flex; align-items: center; justify-content: center; }
.combo-row { display: flex; gap: 4px; }
.next { width: 45px; height: 25px; }

/* status */
.status { height: 36px; flex: none; background: #eff0f2; border-top: 2px solid #9c9c9c; border-bottom: 1px solid #b8bbbe; display: flex; align-items: center; padding-left: 6px; position: relative; }
.st-on { width: 22px; height: 21px; border: 1px solid #b4b4b4; background: #e4e4e4; display: flex; align-items: center; justify-content: center; flex: none; }
.st-globe { margin-left: 7px; flex: none; }
.st-sq { width: 16px; height: 16px; margin-left: 10px; border: 1px solid #1a6e8e; border-radius: 2px; background: linear-gradient(135deg, #f4f8fa, #c8dce8); flex: none; }
.st-sep { width: 1px; height: 26px; background: #b8b8b8; flex: none; }
.st-sep.first { margin-left: 12px; }
.st-grow { flex: 1; }
.st-gap { width: 40px; }
.st-find { display: flex; height: 24px; margin: 0 3px; border: 1px solid #c4c4c4; background: #f9f9f9; flex: none; }
.st-bin { width: 26px; display: flex; align-items: center; justify-content: center; border-right: 1px solid #c4c4c4; }
.st-bin-a { width: 13px; display: flex; align-items: center; justify-content: center; }
.st-filter { width: 177px; height: 24px; margin-left: 97px; margin-right: 17px; border: 1px solid #c4c4c4; background: #f9f9f9; display: flex; align-items: center; flex: none; }
.st-filter-t { flex: 1; padding-left: 7px; font-size: 12px; color: #555; }
.st-filter-a { width: 15px; height: 100%; border-left: 1px solid #c4c4c4; display: flex; align-items: center; justify-content: center; }
.grip { position: absolute; right: 0; bottom: 0; }

/* watermark */
.wm { position: absolute; left: 1607px; top: 966px; width: 206px; height: 62px; background: rgba(255, 255, 255, .26); z-index: 5; }
.wm-logo { position: absolute; left: 2px; top: 0; }
.wm-cn { position: absolute; left: 70px; top: -3px; font-size: 29px; line-height: 40px; font-weight: 700; color: #3f9e9a; white-space: nowrap; }
.wm-en { position: absolute; left: 58px; top: 36px; font: 15.300px "Noto Sans", sans-serif; line-height: 22px; color: #cfe9e8; white-space: nowrap; }
```
